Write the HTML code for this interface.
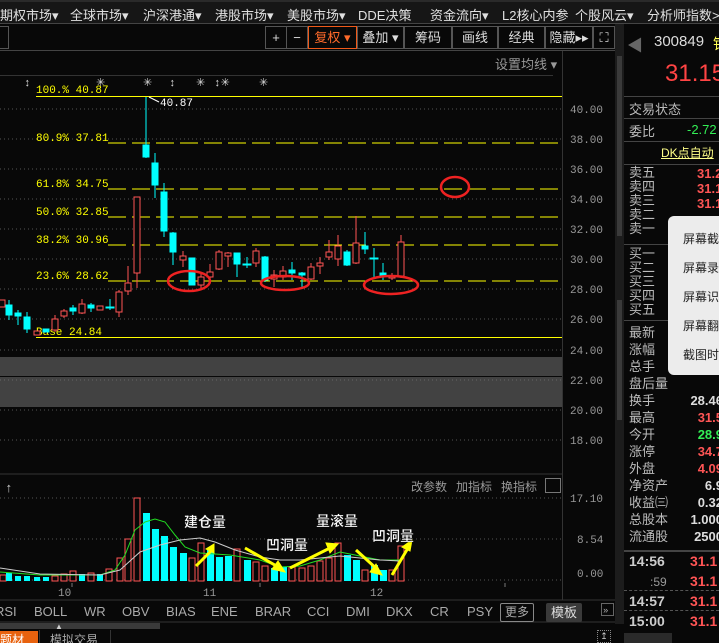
<!DOCTYPE html>
<html><head><meta charset="utf-8"><style>
body{margin:0;width:719px;height:643px;overflow:hidden;background:#080808;font-family:"Liberation Sans","Noto Sans CJK SC",sans-serif;position:relative;color:#c0c0c0}
.a{position:absolute;white-space:nowrap}
.menu{left:0;top:0;width:719px;height:24px;background:#161616;border-top:2px solid #2a2a2a;border-bottom:1px solid #444;box-sizing:border-box}
.menu span{position:absolute;top:3px;font-size:13px;color:#e0e0e0}
.tb{top:26px;height:23px;border:1px solid #555;box-sizing:border-box;font-size:13px;text-align:center;line-height:21px;color:#ddd}
.rp{font-size:13px;color:#bbb}
.pop{left:668px;top:216px;width:60px;height:159px;background:#ececec;border-radius:6px}
.pop div{position:absolute;left:15px;font-size:12px;color:#222}
.ind{top:604px;font-size:13px;color:#aaa}
</style></head><body>
<div class="a menu">
<span style="left:0">期权市场▾</span><span style="left:70px">全球市场▾</span><span style="left:143px">沪深港通▾</span><span style="left:215px">港股市场▾</span><span style="left:287px">美股市场▾</span><span style="left:358px">DDE决策</span><span style="left:430px">资金流向▾</span><span style="left:502px">L2核心内参</span><span style="left:575px">个股风云▾</span><span style="left:647px">分析师指数&gt;&gt;</span>
</div>
<div class="a" style="left:0;top:50px;width:615px;height:1px;background:#444"></div>
<div class="a tb" style="left:-5px;width:14px"></div>
<div class="a tb" style="left:265px;width:22px">+</div>
<div class="a tb" style="left:286px;width:22px">−</div>
<div class="a tb" style="left:308px;width:49px;border-color:#f05a1a;color:#ff6a2a">复权 ▾</div>
<div class="a tb" style="left:357px;width:47px">叠加 ▾</div>
<div class="a tb" style="left:404px;width:48px">筹码</div>
<div class="a tb" style="left:452px;width:46px">画线</div>
<div class="a tb" style="left:498px;width:47px">经典</div>
<div class="a tb" style="left:545px;width:48px">隐藏▸▸</div>
<div class="a tb" style="left:593px;width:22px">⛶</div>
<div class="a" style="left:495px;top:54px;font-size:13px;color:#999">设置均线 ▾</div>
<div class="a" style="left:0;top:75px;width:553px;height:1px;background:#333"></div>
<div class="a" style="left:615px;top:24px;width:9px;height:600px;background:#1c1c1c"></div>
<div class="a" style="left:617px;top:56px;width:5px;height:180px;background:#3a3a3a"></div>
<div class="a" style="left:617px;top:300px;width:5px;height:120px;background:#3a3a3a"></div>

<svg class="a" style="left:0;top:0" width="624" height="643" xmlns="http://www.w3.org/2000/svg" font-family="Liberation Mono,monospace">
<g stroke="#555" stroke-dasharray="1,3">
<line x1="0" y1="109" x2="562" y2="109"/><line x1="0" y1="139" x2="562" y2="139"/><line x1="0" y1="169" x2="562" y2="169"/><line x1="0" y1="199" x2="562" y2="199"/><line x1="0" y1="229" x2="562" y2="229"/><line x1="0" y1="259" x2="562" y2="259"/><line x1="0" y1="289" x2="562" y2="289"/><line x1="0" y1="319" x2="562" y2="319"/><line x1="0" y1="350" x2="562" y2="350"/><line x1="0" y1="410" x2="562" y2="410"/><line x1="0" y1="440" x2="562" y2="440"/>
<line x1="0" y1="498" x2="562" y2="498"/><line x1="0" y1="539" x2="562" y2="539"/><line x1="0" y1="580" x2="562" y2="580"/>
</g>
<rect x="0" y="357" width="562" height="19" fill="#424242"/>
<rect x="0" y="377" width="562" height="30" fill="#424242"/>
<line x1="0" y1="380" x2="562" y2="380" stroke="#666" stroke-dasharray="1,3"/>
<line x1="562.5" y1="51" x2="562.5" y2="600" stroke="#333"/>
<line x1="0" y1="474" x2="562" y2="474" stroke="#333"/>
<line x1="0" y1="600" x2="615" y2="600" stroke="#333"/>
<line x1="0" y1="622" x2="615" y2="622" stroke="#333"/>
<g fill="#999" font-size="11">
<text x="570" y="113">40.00</text><text x="570" y="143">38.00</text><text x="570" y="173">36.00</text><text x="570" y="203">34.00</text><text x="570" y="233">32.00</text><text x="570" y="263">30.00</text><text x="570" y="293">28.00</text><text x="570" y="323">26.00</text><text x="570" y="354">24.00</text><text x="570" y="384">22.00</text><text x="570" y="414">20.00</text><text x="570" y="444">18.00</text>
<text x="570" y="502">17.10</text><text x="577" y="543">8.54</text><text x="577" y="577">0.00</text>
</g>
<g font-size="11" fill="#ddd"><text x="24" y="86">↕</text><text x="96" y="86">✳</text><text x="143" y="86">✳</text><text x="169" y="86">↕</text><text x="196" y="86">✳</text><text x="214" y="86">↕✳</text><text x="259" y="86">✳</text></g>
<g stroke="#ffff00">
<line x1="36" y1="96.5" x2="562" y2="96.5"/>
<line x1="36" y1="337.5" x2="562" y2="337.5"/>
<g stroke-dasharray="18,6"><line x1="108" y1="143" x2="558" y2="143"/><line x1="108" y1="189" x2="558" y2="189"/><line x1="108" y1="217" x2="558" y2="217"/><line x1="108" y1="245" x2="558" y2="245"/><line x1="108" y1="281" x2="558" y2="281"/></g>
</g>
<g fill="#ffff00" font-size="11"><text x="36" y="93">100.% 40.87</text><text x="36" y="141">80.9% 37.81</text><text x="36" y="187">61.8% 34.75</text><text x="36" y="215">50.0% 32.85</text><text x="36" y="243">38.2% 30.96</text><text x="36" y="279">23.6% 28.62</text><text x="36" y="335">Base  24.84</text></g>
<text x="160" y="106" fill="#fff" font-size="11">40.87</text>
<line x1="149" y1="97" x2="159" y2="102" stroke="#fff"/>
<!-- candles -->
<g stroke="#ff5555" fill="#080808" stroke-width="1">
<rect x="-1" y="300" width="6" height="7"/><rect x="34" y="331" width="6" height="4"/>
<line x1="55" y1="315" x2="55" y2="332"/><rect x="52" y="319" width="6" height="11"/>
<line x1="64" y1="309" x2="64" y2="318"/><rect x="61" y="311" width="6" height="5"/>
<line x1="82" y1="299" x2="82" y2="314"/><rect x="79" y="304" width="6" height="9"/>
<rect x="97" y="306" width="6" height="4"/>
<line x1="119" y1="290" x2="119" y2="317"/><rect x="116" y="292" width="6" height="20"/>
<line x1="128" y1="266" x2="128" y2="295"/><rect x="125" y="283" width="6" height="8"/>
<line x1="137" y1="197" x2="137" y2="288"/><rect x="134" y="197" width="6" height="76"/>
<line x1="183" y1="251" x2="183" y2="267"/><rect x="180" y="256" width="6" height="4"/>
<line x1="201" y1="272" x2="201" y2="288"/><rect x="198" y="277" width="6" height="8"/>
<line x1="210" y1="264" x2="210" y2="278"/><rect x="207" y="272" width="6" height="5"/>
<line x1="219" y1="250" x2="219" y2="270"/><rect x="216" y="252" width="6" height="17"/>
<line x1="228" y1="252" x2="228" y2="267"/><rect x="225" y="253" width="6" height="3"/>
<line x1="256" y1="248" x2="256" y2="267"/><rect x="253" y="251" width="6" height="12"/>
<line x1="274" y1="270" x2="274" y2="287"/><rect x="271" y="275" width="6" height="4"/>
<line x1="283" y1="266" x2="283" y2="280"/><rect x="280" y="271" width="6" height="6"/>
<line x1="311" y1="263" x2="311" y2="280"/><rect x="308" y="267" width="6" height="12"/>
<line x1="320" y1="257" x2="320" y2="274"/><rect x="317" y="263" width="6" height="3"/>
<line x1="329" y1="240" x2="329" y2="260"/><rect x="326" y="252" width="6" height="5"/>
<line x1="338" y1="235" x2="338" y2="266"/><rect x="335" y="246" width="6" height="13"/>
<line x1="356" y1="216" x2="356" y2="264"/><rect x="353" y="243" width="6" height="20"/>
<line x1="392" y1="273" x2="392" y2="280"/><rect x="389" y="276" width="6" height="2"/>
<line x1="401" y1="235" x2="401" y2="278"/><rect x="398" y="242" width="6" height="34"/>
</g>
<g stroke="#00ffff" fill="#00ffff">
<line x1="9" y1="300" x2="9" y2="320"/><rect x="6" y="305" width="6" height="10"/>
<line x1="18" y1="310" x2="18" y2="325"/><rect x="15" y="313" width="6" height="3"/>
<line x1="27" y1="312" x2="27" y2="333"/><rect x="24" y="317" width="6" height="12"/>
<rect x="43" y="329" width="6" height="3"/>
<line x1="73" y1="305" x2="73" y2="315"/><rect x="70" y="308" width="6" height="3"/>
<line x1="91" y1="303" x2="91" y2="312"/><rect x="88" y="305" width="6" height="3"/>
<line x1="110" y1="299" x2="110" y2="310"/><rect x="106" y="307" width="8" height="1"/>
<line x1="146" y1="97" x2="146" y2="158"/><rect x="143" y="145" width="6" height="12"/>
<line x1="155" y1="153" x2="155" y2="198"/><rect x="152" y="163" width="6" height="22"/>
<line x1="164" y1="183" x2="164" y2="237"/><rect x="161" y="192" width="6" height="39"/>
<line x1="173" y1="232" x2="173" y2="265"/><rect x="170" y="233" width="6" height="19"/>
<rect x="189" y="258" width="6" height="27"/>
<line x1="237" y1="253" x2="237" y2="277"/><rect x="234" y="253" width="6" height="11"/>
<line x1="247" y1="257" x2="247" y2="268"/><rect x="243" y="264" width="8" height="1"/>
<line x1="265" y1="256" x2="265" y2="282"/><rect x="262" y="257" width="6" height="23"/>
<line x1="292" y1="262" x2="292" y2="280"/><rect x="289" y="270" width="6" height="3"/>
<line x1="302" y1="272" x2="302" y2="287"/><rect x="299" y="273" width="6" height="2"/>
<line x1="347" y1="250" x2="347" y2="266"/><rect x="344" y="252" width="6" height="13"/>
<line x1="365" y1="232" x2="365" y2="254"/><rect x="362" y="246" width="6" height="3"/>
<line x1="374" y1="248" x2="374" y2="277"/><rect x="370" y="258" width="8" height="1"/>
<line x1="383" y1="263" x2="383" y2="280"/><rect x="380" y="273" width="6" height="3"/>
</g>
<g fill="none" stroke="#ee2222" stroke-width="2.5">
<ellipse cx="189" cy="281" rx="21" ry="10"/><ellipse cx="285" cy="283" rx="24" ry="7"/><ellipse cx="391" cy="285" rx="27" ry="9"/><ellipse cx="455" cy="187" rx="14" ry="10"/>
</g>
<!-- volume -->
<text x="5" y="492" fill="#ccc" font-size="13">↑</text>
<g stroke="#ff5555" fill="#080808">
<rect x="0" y="575" width="6" height="6"/><rect x="52" y="576" width="6" height="5"/><rect x="61" y="574" width="6" height="7"/><rect x="70" y="571" width="6" height="10"/><rect x="88" y="573" width="6" height="8"/><rect x="106" y="569" width="6" height="12"/><rect x="117" y="558" width="6" height="23"/><rect x="125" y="539" width="6" height="42"/><rect x="134" y="498" width="6" height="83"/><rect x="189" y="558" width="6" height="23"/><rect x="198" y="543" width="6" height="38"/><rect x="234" y="549" width="6" height="32"/><rect x="253" y="562" width="6" height="19"/><rect x="262" y="566" width="6" height="15"/><rect x="289" y="567" width="6" height="14"/><rect x="299" y="568" width="6" height="13"/><rect x="308" y="566" width="6" height="15"/><rect x="317" y="561" width="6" height="20"/><rect x="326" y="558" width="6" height="23"/><rect x="335" y="543" width="6" height="38"/><rect x="362" y="570" width="6" height="11"/><rect x="389" y="570" width="6" height="11"/><rect x="398" y="546" width="6" height="35"/>
</g>
<g fill="#00ffff">
<rect x="6" y="573" width="6" height="8"/><rect x="15" y="576" width="6" height="5"/><rect x="24" y="576" width="6" height="5"/><rect x="34" y="577" width="6" height="4"/><rect x="43" y="577" width="6" height="4"/><rect x="79" y="574" width="6" height="7"/><rect x="97" y="574" width="6" height="7"/><rect x="143" y="513" width="7" height="68"/><rect x="152" y="529" width="7" height="52"/><rect x="161" y="536" width="7" height="45"/><rect x="170" y="547" width="7" height="34"/><rect x="180" y="553" width="7" height="28"/><rect x="207" y="549" width="7" height="32"/><rect x="216" y="557" width="7" height="24"/><rect x="225" y="556" width="7" height="25"/><rect x="244" y="560" width="7" height="21"/><rect x="271" y="568" width="7" height="13"/><rect x="280" y="567" width="7" height="14"/><rect x="344" y="555" width="7" height="26"/><rect x="353" y="560" width="7" height="21"/><rect x="371" y="565" width="7" height="16"/><rect x="380" y="570" width="7" height="11"/>
</g>
<polyline fill="none" stroke="#22dd22" points="0,572 40,575 100,575 115,570 125,555 135,530 145,522 155,519 165,522 175,535 185,547 200,553 230,555 260,560 280,567 300,566 320,560 340,552 360,556 380,560 400,560"/>
<polyline fill="none" stroke="#ccc" points="0,568 40,574 100,575 120,570 140,552 160,545 180,540 200,538 215,542 235,550 260,557 280,560 300,560 320,558 340,556 360,558 380,560 400,561"/>
<g fill="#ffff00" stroke="#ffff00" stroke-width="3">
<line x1="196" y1="566" x2="212" y2="550"/><polygon points="214,544 206,549 214,553" stroke-width="1"/>
<line x1="245" y1="548" x2="280" y2="568"/><polygon points="285,572 272,569 278,561" stroke-width="1"/>
<line x1="290" y1="568" x2="330" y2="548"/><polygon points="338,544 326,543 330,553" stroke-width="1"/>
<line x1="356" y1="550" x2="378" y2="570"/><polygon points="382,575 370,572 376,564" stroke-width="1"/>
<line x1="392" y1="575" x2="408" y2="548"/><polygon points="412,540 402,547 410,551" stroke-width="1"/>
</g>
<g fill="#fff" font-size="14" font-weight="bold" font-family="Liberation Sans,Noto Sans CJK SC,sans-serif" stroke="#000" stroke-width="0.3">
<text x="184" y="527">建仓量</text><text x="266" y="550">凹洞量</text><text x="316" y="526">量滚量</text><text x="372" y="541">凹洞量</text>
</g>
<g fill="#999" font-size="12" font-family="Liberation Sans,Noto Sans CJK SC,sans-serif"><text x="411" y="491">改参数</text><text x="456" y="491">加指标</text><text x="501" y="491">换指标</text></g>
<rect x="545.5" y="478.5" width="15" height="14" fill="none" stroke="#777"/>
<g fill="#999" font-size="11"><text x="58" y="596">10</text><text x="203" y="596">11</text><text x="370" y="596">12</text></g>
<g stroke="#777"><line x1="72" y1="583" x2="72" y2="587"/><line x1="260" y1="583" x2="260" y2="587"/><line x1="505" y1="583" x2="505" y2="587"/></g>
<rect x="601.5" y="603.5" width="12" height="12" fill="none" stroke="#666"/>
<text x="603" y="613" fill="#aaa" font-size="9">»</text>
</svg>
<div class="a ind" style="left:-5px">RSI</div><div class="a ind" style="left:34px">BOLL</div><div class="a ind" style="left:84px">WR</div><div class="a ind" style="left:122px">OBV</div><div class="a ind" style="left:166px">BIAS</div><div class="a ind" style="left:211px">ENE</div><div class="a ind" style="left:255px">BRAR</div><div class="a ind" style="left:307px">CCI</div><div class="a ind" style="left:346px">DMI</div><div class="a ind" style="left:386px">DKX</div><div class="a ind" style="left:430px">CR</div><div class="a ind" style="left:467px">PSY</div>
<div class="a" style="left:500px;top:603px;width:32px;height:17px;border:1px solid #888;border-radius:2px;font-size:12px;color:#aaa;text-align:center;line-height:17px">更多</div>
<div class="a" style="left:546px;top:603px;width:36px;height:19px;background:#3a3a3a;border-radius:2px;font-size:13px;color:#ddd;text-align:center;line-height:19px">模板</div>
<div class="a" style="left:0;top:623px;width:160px;height:6px;background:#3a3a3a"></div>
<div class="a" style="left:55px;top:622px;font-size:8px;color:#ccc">▲</div>
<div class="a" style="left:0;top:631px;width:38px;height:12px;background:#e8620e;font-size:12px;color:#fff;line-height:18px;overflow:hidden">题材</div>
<div class="a" style="left:50px;top:631px;font-size:12px;color:#aaa;line-height:18px;height:12px;overflow:hidden">模拟交易</div>
<div class="a" style="left:39px;top:630px;width:1px;height:13px;background:#333"></div>
<div class="a" style="left:110px;top:630px;width:1px;height:13px;background:#333"></div>
<div class="a" style="left:597px;top:630px;width:12px;height:11px;border:1px dotted #888;font-size:9px;color:#ccc;text-align:center">↥</div>
<!-- right panel -->
<div class="a" style="left:624px;top:24px;width:95px;height:619px;background:#080808"></div>
<div class="a" style="left:627px;top:32px;font-size:16px;color:#666">◀</div>
<div class="a" style="left:654px;top:33px;font-size:15px;color:#ddd">300849</div>
<div class="a" style="left:713px;top:33px;font-size:15px;color:#ffff55">锦</div>
<div class="a" style="left:665px;top:60px;font-size:24px;color:#ff4444">31.15</div>
<div class="a" style="left:624px;top:96px;width:95px;height:1px;background:#444"></div>
<div class="a rp" style="left:629px;top:99px">交易状态</div>
<div class="a" style="left:624px;top:118px;width:95px;height:1px;background:#444"></div>
<div class="a rp" style="left:629px;top:121px">委比</div><div class="a" style="left:687px;top:122px;font-size:13px;color:#33ee55">-2.72</div>
<div class="a" style="left:624px;top:141px;width:95px;height:1px;background:#444"></div>
<div class="a" style="left:661px;top:144px;font-size:12px;color:#ffff88;text-decoration:underline">DK点自动</div>
<div class="a" style="left:624px;top:164px;width:95px;height:1px;background:#444"></div>
<div class="a rp" style="left:629px;top:166px;line-height:14px">卖五<br>卖四<br>卖三<br>卖二<br>卖一</div>
<div class="a" style="left:697px;top:166px;line-height:15px;font-size:13px;color:#ff5555;font-weight:bold">31.2<br>31.1<br>31.1</div>
<div class="a" style="left:624px;top:244px;width:44px;height:1px;background:#444"></div>
<div class="a rp" style="left:629px;top:247px;line-height:14px">买一<br>买二<br>买三<br>买四<br>买五</div>
<div class="a" style="left:624px;top:320px;width:44px;height:1px;background:#444"></div>
<div class="a rp" style="left:629px;top:324px;line-height:17px">最新<br>涨幅<br>总手<br>盘后量<br>换手<br>最高<br>今开<br>涨停<br>外盘<br>净资产<br>收益㈢<br>总股本<br>流通股</div>
<div class="a" style="left:678px;top:392px;line-height:17px;font-size:13px;font-weight:bold;text-align:right;width:45px">
<span style="color:#ddd">28.46</span><br><span style="color:#ff5555">31.5</span><br><span style="color:#33ee55">28.9</span><br><span style="color:#ff5555">34.7</span><br><span style="color:#ff5555">4.09</span><br><span style="color:#ddd">6.9</span><br><span style="color:#ddd">0.32</span><br><span style="color:#ddd">1.000</span><br><span style="color:#ddd">2500</span></div>
<div class="a" style="left:624px;top:550px;width:95px;height:2px;background:#444"></div>
<div class="a" style="left:629px;top:553px;font-size:14px;color:#ccc;font-weight:bold">14:56</div><div class="a" style="left:690px;top:553px;font-size:14px;color:#ff5555;font-weight:bold">31.1</div>
<div class="a" style="left:650px;top:575px;font-size:12px;color:#999">:59</div><div class="a" style="left:690px;top:573px;font-size:14px;color:#ff5555;font-weight:bold">31.1</div>
<div class="a" style="left:624px;top:590px;width:95px;border-top:1px dashed #555"></div>
<div class="a" style="left:629px;top:593px;font-size:14px;color:#ccc;font-weight:bold">14:57</div><div class="a" style="left:690px;top:593px;font-size:14px;color:#ff5555;font-weight:bold">31.1</div>
<div class="a" style="left:624px;top:610px;width:95px;border-top:1px dashed #555"></div>
<div class="a" style="left:629px;top:613px;font-size:14px;color:#ccc;font-weight:bold">15:00</div><div class="a" style="left:690px;top:613px;font-size:14px;color:#ff5555;font-weight:bold">31.1</div>
<div class="a" style="left:624px;top:633px;width:48px;height:10px;background:#2a2a2a"></div>
<div class="a pop"><div style="top:14px">屏幕截</div><div style="top:43px">屏幕录</div><div style="top:72px">屏幕识</div><div style="top:101px">屏幕翻</div><div style="top:130px">截图时</div></div>
</body></html>
